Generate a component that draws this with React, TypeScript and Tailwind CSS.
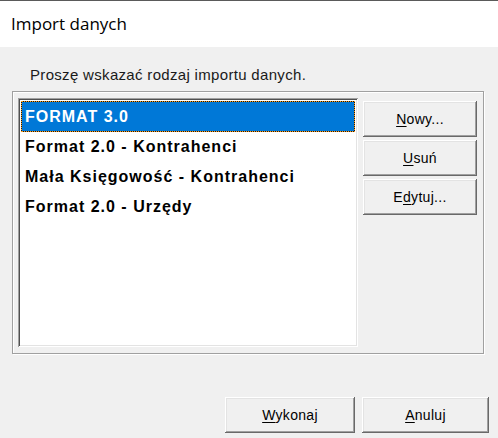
const btn =
  "flex items-center justify-center bg-[#f0f0f0] text-[14px] text-black tracking-[0.3px] shadow-[inset_-1px_-1px_0_#696969,inset_1px_1px_0_#ffffff,inset_-2px_-2px_0_#a0a0a0,inset_2px_2px_0_#e3e3e3]";

function Btn({ u, rest, pre, className }: { u: string; rest: string; pre?: string; className: string }) {
  return (
    <button className={`${btn} ${className}`}>
      <span>
        {pre}
        <span className="underline underline-offset-2">{u}</span>
        {rest}
      </span>
    </button>
  );
}

const items = [
  "FORMAT 3.0",
  "Format 2.0 - Kontrahenci",
  "Mała Księgowość - Kontrahenci",
  "Format 2.0 - Urzędy",
];

export default function App() {
  return (
    <div className="w-[498px] h-[438px] flex flex-col bg-[#f0f0f0] font-['Liberation_Sans',sans-serif]">
      <div className="h-[47px] shrink-0 bg-white border-t border-[#5a5a5a] flex items-center pl-[11px] pb-[1px] text-[17px] text-black font-['Open_Sans',sans-serif]">
        Import danych
      </div>
      <div className="flex-1 flex flex-col pl-[12px] pr-[14px]">
        <p className="mt-[18px] pl-[18px] text-[15px] leading-[20px] text-[#1a1a1a] tracking-[0.32px]">
          Proszę wskazać rodzaj importu danych.
        </p>
        <div className="mt-[6px] h-[263px] border border-[#a0a0a0] shadow-[inset_1px_1px_0_#ffffff,1px_1px_0_#ffffff] flex pl-[5px] pt-[6px] pb-[6px] pr-[6px] gap-[5px]">
          <div className="w-[340px] bg-white shadow-[inset_1px_1px_0_#a0a0a0,inset_-1px_-1px_0_#ffffff,inset_2px_2px_0_#505050,inset_-2px_-2px_0_#e3e3e3] p-[3px]">
            {items.map((t, i) =>
              i === 0 ? (
                <div key={t} className="bg-[#1a1a1a] h-[31px]">
                  <div className="h-full border border-dotted border-[#ff9f1a] bg-[#0078d7] bg-clip-padding flex items-center pl-[3px] text-white font-bold text-[16px] tracking-[1px]">
                    {t}
                  </div>
                </div>
              ) : (
                <div key={t} className="h-[30px] flex items-center pl-[4px] text-black font-bold text-[16px] tracking-[1px]">
                  {t}
                </div>
              )
            )}
          </div>
          <div className="w-[114px] flex flex-col gap-[3px] pt-[3px]">
            <Btn className="h-[36px]" u="N" rest="owy..." />
            <Btn className="h-[36px]" u="U" rest="suń" />
            <Btn className="h-[36px]" pre="E" u="d" rest="ytuj..." />
          </div>
        </div>
        <div className="mt-auto mb-[5px] flex justify-end gap-[7px] -mr-[5px]">
          <Btn className="w-[130px] h-[36px]" u="W" rest="ykonaj" />
          <Btn className="w-[127px] h-[36px]" u="A" rest="nuluj" />
        </div>
      </div>
    </div>
  );
}
